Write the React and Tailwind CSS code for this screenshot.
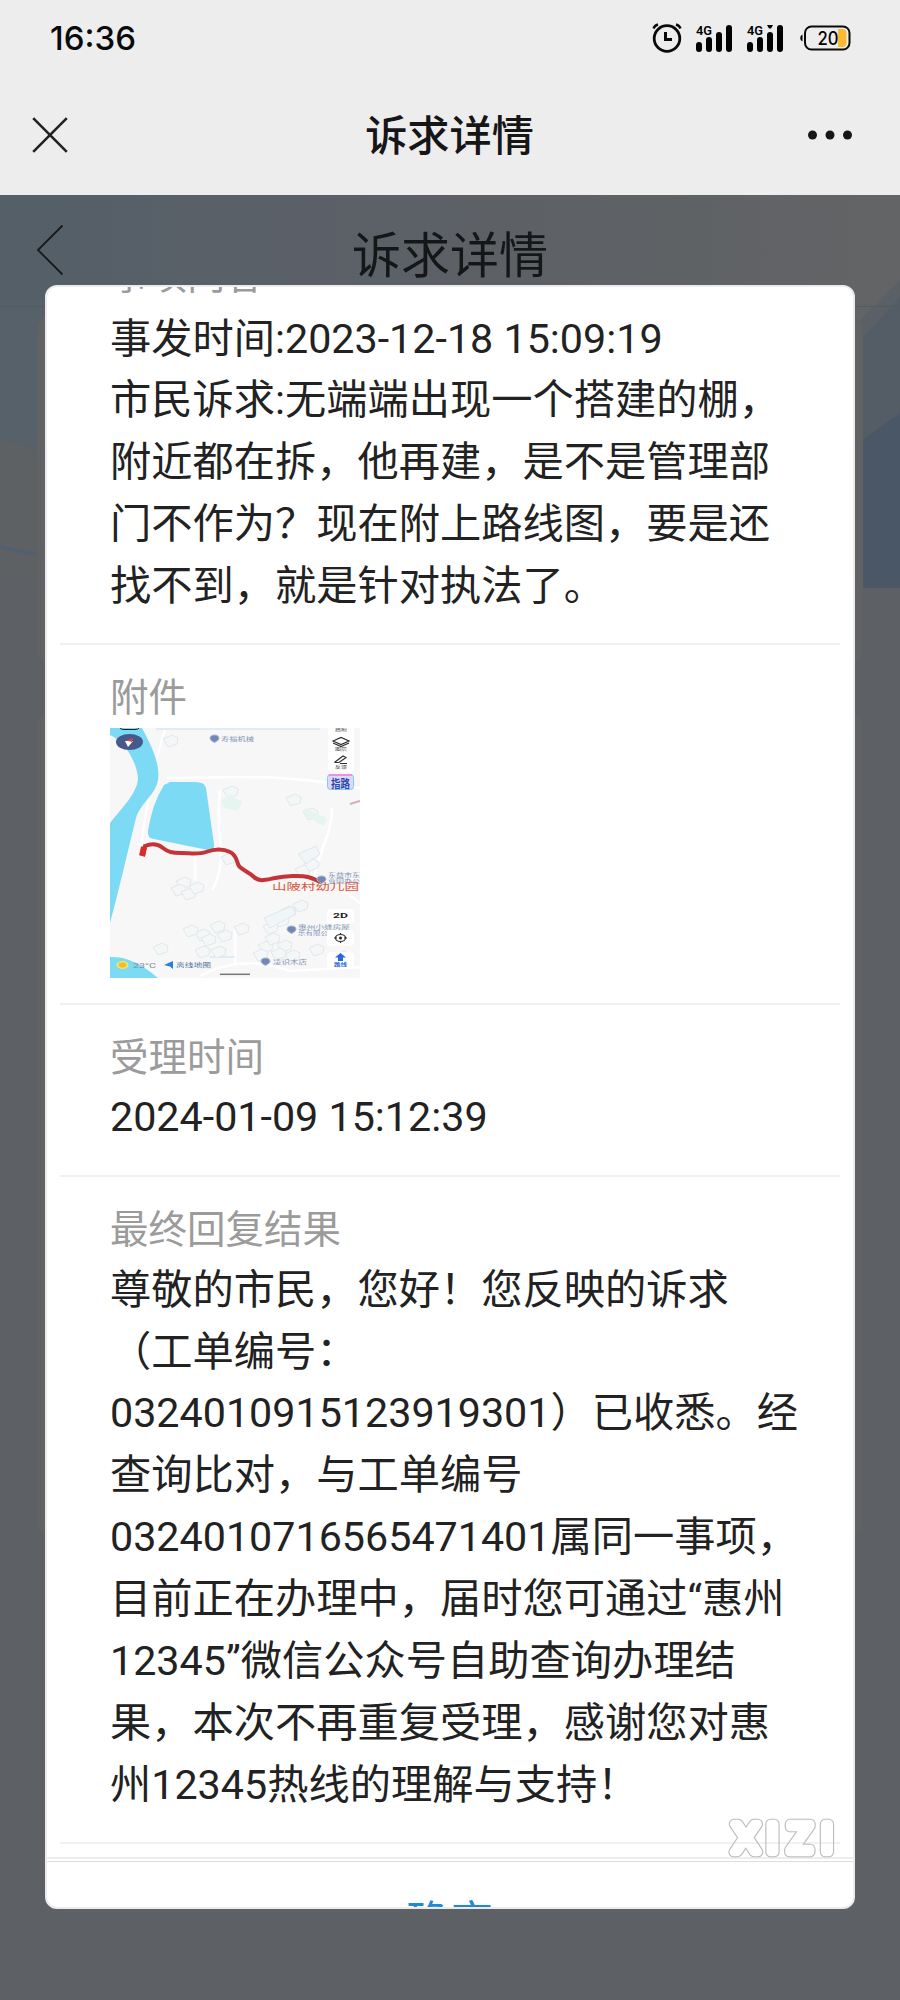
import React from 'react';

const body = [
  '事发时间:2023-12-18 15:09:19',
  '市民诉求:无端端出现一个搭建的棚，',
  '附近都在拆，他再建，是不是管理部',
  '门不作为？现在附上路线图，要是还',
  '找不到，就是针对执法了。',
];

const reply = [
  '尊敬的市民，您好！您反映的诉求',
  '（工单编号：',
  '0324010915123919301）已收悉。经',
  '查询比对，与工单编号',
  '0324010716565471401属同一事项，',
  '目前正在办理中，届时您可通过“惠州',
  '12345”微信公众号自助查询办理结',
  '果，本次不再重复受理，感谢您对惠',
  '州12345热线的理解与支持！',
];

function Lines({ items }) {
  return (
    <div className="text-[41.25px] leading-[61.875px] text-[#222222] whitespace-nowrap [text-spacing-trim:space-all]">
      {items.map((line) => (
        <p key={line}>{line}</p>
      ))}
    </div>
  );
}

function Label({ children }) {
  return <div className="text-[38.5px] leading-[57.6px] text-[#9b9b9b] whitespace-nowrap">{children}</div>;
}

function Signal({ dotted }) {
  return (
    <svg className="overflow-visible" width="37" height="29" viewBox="0 0 37 29">
      <text x="0" y="11" fontFamily="Roboto" fontSize="13.500" fontWeight="600" textLength="16" lengthAdjust="spacingAndGlyphs">4G</text>
      <rect x="0" y="18" width="6" height="10" rx="3" />
      <rect x="10" y="13" width="6" height="15" rx="3" />
      <rect x="20" y="8" width="6" height="20" rx="3" />
      <rect x="30" y="1" width="6" height="27" rx="3" />
      {dotted && <path d="M20 1h6l-2 3.500h-2z" />}
    </svg>
  );
}

function StatusBar() {
  return (
    <div className="flex h-[75px] items-center justify-between pl-[50px] pr-[49px] pt-px">
      <span className="font-[Inter,sans-serif] text-[33px] font-medium leading-none text-[#0a0a0a]">16:36</span>
      <div className="flex items-center">
        <svg width="30" height="30" viewBox="0 0 30 30" fill="none" stroke="#0a0a0a">
          <circle cx="15" cy="15.500" r="12.800" strokeWidth="2.800" />
          <path d="M13.500 9v7.500H20" strokeWidth="3" />
          <path d="M1.500 5.500Q2.500 2.500 6 1.500M28.500 5.500Q27.500 2.500 24 1.500" strokeWidth="2.400" />
        </svg>
        <div className="ml-[14px]"><Signal /></div>
        <div className="ml-[14px]"><Signal dotted /></div>
        <svg className="ml-[16px]" width="51" height="26" viewBox="0 0 51 26">
          <path d="M2.500 9.500v7C.800 15.500.300 14.500.300 13s.500-2.500 2.200-3.500z" />
          <rect x="5" y="1.500" width="44.500" height="23" rx="6.500" fill="none" stroke="#0a0a0a" strokeWidth="2" />
          <path d="M38 4h4.500a4 4 0 0 1 4 4v10a4 4 0 0 1-4 4H38z" fill="#fbb92f" />
          <text x="17.500" y="19.500" fontFamily="Inter" fontSize="18" fontWeight="500" textLength="21" lengthAdjust="spacingAndGlyphs">20</text>
        </svg>
      </div>
    </div>
  );
}

function NavBar() {
  return (
    <div className="flex h-[120px] items-center justify-between pl-[32px] pr-[47px]">
      <svg width="36" height="36" viewBox="0 0 36 36" fill="none" stroke="#222" strokeWidth="2.600">
        <path d="M1.200 1.200 34.800 34.800M34.800 1.200 1.200 34.800" />
      </svg>
      <h1 className="ml-[24px] pt-[4px] text-[42.2px] font-medium leading-none text-[#161616]">诉求详情</h1>
      <svg width="46" height="10" viewBox="0 0 46 10" fill="#161616">
        <circle cx="5.500" cy="5" r="4.500" />
        <circle cx="23" cy="5" r="4.500" />
        <circle cx="40.500" cy="5" r="4.500" />
      </svg>
    </div>
  );
}

// dimmed page artwork behind the dialog
function Backdrop() {
  return (
    <svg className="absolute inset-0" width="900" height="1805" viewBox="0 195 900 1805">
      <defs>
        <linearGradient id="top" x1="0" y1="0" x2="1" y2="0">
          <stop offset="0" stopColor="#545f68" />
          <stop offset="0.350" stopColor="#5b6068" />
          <stop offset="0.600" stopColor="#5d6165" />
          <stop offset="1" stopColor="#636466" />
        </linearGradient>
      </defs>
      <rect y="195" width="900" height="1805" fill="#5d6065" />
      <rect y="195" width="900" height="250" fill="url(#top)" />
      <path d="M0 300H60V455L36 451 0 439z" fill="#56616a" />
      <path d="M0 439 45 453V588H0z" fill="#5e6164" />
      <path d="M0 545 45 554V558L0 549z" fill="#50606e" />
      <path d="M855 325 900 280V588H855z" fill="#5a6066" />
      <path d="M855 347 900 297V588H855z" fill="#545d66" />
      <path d="M855 445 900 413V588H855z" fill="#4a5767" />
      <rect x="37" y="312" width="826" height="355" rx="20" fill="#616263" />
      <rect x="37" y="708" width="826" height="833" rx="20" fill="#606263" />
      <path d="M0 306.500H45M855 306.500H900" stroke="#535a61" />
    </svg>
  );
}

function MapThumb() {
  const blocks = [
    [118, 131], [73, 155], [68, 162], [192, 143], [201, 137], [107, 199], [92, 207], [80, 203],
    [131, 201], [50, 221], [92, 224], [108, 224], [155, 219], [174, 218], [160, 200], [178, 184],
    [190, 178], [206, 222], [232, 229], [171, 193], [200, 86], [183, 72], [120, 64], [60, 13],
    [78, 166], [86, 160], [98, 212], [114, 208], [150, 227], [168, 226], [182, 228], [162, 211],
  ];
  return (
    <svg width="250" height="250" viewBox="0 0 250 250" fontFamily="Roboto, 'Noto Sans CJK SC', sans-serif">
      <rect width="250" height="250" fill="#f7f7f8" />
      <path d="M57 50c50 0 110-6 193 10M110 62c-6 40 10 70-8 100M222 80c0 30-16 45-18 75M55 2C45 30 34 90 31 120M85 128v24M125 200v35M230 160l20 15M90 248c30-16 60-16 90-5l70-4" fill="none" stroke="#fff" strokeWidth="2.500" />
      <path d="M46 1h164M100 229h25" stroke="#dfebf6" strokeWidth="2" />
      <g fill="#f4f7f7" stroke="#e2e7e9" strokeWidth="1">
        {blocks.map(([x, y]) => (
          <path key={`${x}-${y}`} d={`M${x - 7} ${y - 2}l9-4 6 3-1 6-9 3z`} />
        ))}
        <path d="M188 126l18-8 4 8-14 10zM154 190l28-12 4 8-26 14z" fill="#eef6f7" />
      </g>
      <path d="M111 72l10-6 5 5 7 2-5 10-14-3zM195 80l22 10-3 8-20-10z" fill="#e6f5ef" />
      <path d="M0 0H32C44 22 50 38 48 52 46 66 30 76 26 90 18 122 10 158 0 195V95C12 80 28 64 28 50 26 30 12 12 0 7z" fill="#7cdaf4" />
      <path d="M0 229C20 228 36 240 48 250H0z" fill="#7cdaf4" />
      <path d="M60 54H85Q95 54 96 60L104 116Q105 122 98 122L44 111Q37 110 38 103 42 76 54 57z" fill="#7cdaf4" />
      <path d="M33 128 35 118C42 115 48 116 53 120S62 125 71 125 88 127 96 124 112 120 120 124 126 134 129 138 139 144 144 149 155 152 165 150 190 147 198 149 206 153 212 154" fill="none" stroke="#c43337" strokeWidth="4" />
      <path d="M32 128 34 119" stroke="#d52d2d" strokeWidth="6" />
      <path d="M240 76 250 73" stroke="#d5aeb2" strokeWidth="2" />
      <path d="M10 0q1 1.500 4 1.500h11q3 0 4-1.500" fill="none" stroke="#222" />
      <ellipse cx="19.500" cy="14" rx="13.500" ry="8" fill="#45598a" />
      <path d="M15 13l8 0-5 6z" fill="#fff" />
      <path d="M16 12.500l7-2.500-1 4z" fill="#e0434f" />

      <g fill="#7188b5" stroke="#a9b7d3">
        <path d="M100 10.500a4.500 3.500 0 0 1 9 0q0 2-4.500 4-4.500-2-4.500-4zM207 151.500a4.500 3.500 0 0 1 9 0q0 2-4.500 4-4.500-2-4.500-4zM177 201.500a4.500 3.500 0 0 1 9 0q0 2-4.500 4-4.500-2-4.500-4zM151 233.500a4.500 3.500 0 0 1 9 0q0 2-4.500 4-4.500-2-4.500-4z" />
      </g>
      <g fill="#8193b3" fontSize="5.500">
        <text x="111" y="13" textLength="33" lengthAdjust="spacingAndGlyphs">寿福机械</text>
        <text x="218" y="149" textLength="32" lengthAdjust="spacingAndGlyphs">东益市东</text>
        <text x="218" y="155" textLength="32" lengthAdjust="spacingAndGlyphs">业园办公</text>
        <text x="188" y="201" textLength="52" lengthAdjust="spacingAndGlyphs">惠州小蜂房屋</text>
        <text x="188" y="207" textLength="30" lengthAdjust="spacingAndGlyphs">乐有限公</text>
        <text x="163" y="236" textLength="34" lengthAdjust="spacingAndGlyphs">凌识木店</text>
        <text x="66" y="239" fill="#53749c" textLength="35" lengthAdjust="spacingAndGlyphs">离线地图</text>
      </g>
      <text x="162" y="161.500" fontSize="9.500" fill="#d9583c" textLength="87" lengthAdjust="spacingAndGlyphs">山陂村幼儿园</text>

      <rect x="218" y="-6" width="26" height="50" rx="4" fill="#fff" />
      <rect x="217" y="181" width="27" height="15" rx="4" fill="#fff" />
      <rect x="217" y="202" width="27" height="16" rx="4" fill="#fff" />
      <rect x="217" y="224" width="27" height="17" rx="4" fill="#fff" />
      <g fill="none" stroke="#303030" strokeWidth="1.200">
        <path d="M223 13 231 9.500 239 13 231 16.500zM223 15 231 18.500 239 15" />
        <path d="M225 34 233 28 236 29.500 229 34.500H225zM230 35.500H237" />
        <ellipse cx="230.500" cy="210" rx="5" ry="3.500" />
        <path d="M224 210h3M234 210h3M230.500 205v2M230.500 213v2" />
      </g>
      <circle cx="230.500" cy="210" r="1.500" fill="#222" />
      <g fill="#4a4a4a" fontSize="4">
        <text x="225" y="4" textLength="12" lengthAdjust="spacingAndGlyphs">搭附</text>
        <text x="225" y="23" textLength="12" lengthAdjust="spacingAndGlyphs">图层</text>
        <text x="225" y="41" textLength="12" lengthAdjust="spacingAndGlyphs">反馈</text>
      </g>
      <rect x="217.500" y="46.500" width="26" height="15" rx="3" fill="#ddd9fb" stroke="#80c9ef" />
      <path d="M219 47H242" stroke="#e595dc" strokeWidth="2" />
      <text x="221" y="60" fontSize="11" fontWeight="700" fill="#2a45a8" textLength="19" lengthAdjust="spacingAndGlyphs">指路</text>
      <text x="223" y="190" fontSize="7" fontWeight="700" fill="#222" textLength="15" lengthAdjust="spacingAndGlyphs">2D</text>
      <path d="M230.500 225 236 229.500H233V233H228V229.500H225z" fill="#2868df" />
      <text x="224" y="238" fontSize="4.500" fontWeight="700" fill="#2868df" textLength="13" lengthAdjust="spacingAndGlyphs">路线</text>
      <ellipse cx="12.500" cy="237" rx="6" ry="4" fill="#f8e46f" />
      <ellipse cx="12.500" cy="237" rx="4" ry="2.800" fill="#f5bf28" />
      <text x="23" y="239.500" fontSize="7" fill="#7e8ba0" textLength="23" lengthAdjust="spacingAndGlyphs">23°C</text>
      <path d="M54 237 63 233V241L60 238.500z" fill="#2380dc" />
      <path d="M110 246.300H140" stroke="#777" strokeWidth="1.500" />
    </svg>
  );
}

// hollow rounded lettering: thick stroke minus a slightly thinner one
function Watermark() {
  return (
    <svg className="absolute bottom-[49px] right-[18px]" width="114" height="42" viewBox="0 0 114 42">
      <defs>
        <mask id="outline" maskUnits="userSpaceOnUse" x="0" y="0" width="114" height="42">
          <g fontFamily="Lato" fontSize="39" strokeLinejoin="round" textAnchor="middle">
            <g fill="#fff" stroke="#fff" strokeWidth="10.500">
              <text x="25" y="36">X</text>
              <text x="51.500" y="36">I</text>
              <text x="79" y="36">Z</text>
              <text x="106" y="36">I</text>
            </g>
            <g fill="#000" stroke="#000" strokeWidth="8.300">
              <text x="25" y="36">X</text>
              <text x="51.500" y="36">I</text>
              <text x="79" y="36">Z</text>
              <text x="106" y="36">I</text>
            </g>
          </g>
        </mask>
      </defs>
      <rect width="114" height="42" fill="#bdbdbd" mask="url(#outline)" />
    </svg>
  );
}

function Dialog() {
  return (
    <div className="relative mx-[45px] mt-[90px] flex h-[1624px] flex-col overflow-hidden rounded-[12px] border-2 border-[#ececee] bg-white">
      <div className="h-[1570px] shrink-0 overflow-hidden px-[13px]">
        <section className="-mt-[40px] border-b-2 border-[#f1f1f1] pb-[25px] pl-[50px]">
          <Label>事项内容</Label>
          <div className="mt-[4px]">
            <Lines items={body} />
          </div>
        </section>
        <section className="border-b-2 border-[#f1f1f1] pb-[25px] pl-[50px] pt-[24px]">
          <Label>附件</Label>
          <div className="mt-px">
            <MapThumb />
          </div>
        </section>
        <section className="border-b-2 border-[#f1f1f1] pb-[26px] pl-[50px] pt-[24px]">
          <Label>受理时间</Label>
          <div className="mt-px">
            <Lines items={['2024-01-09 15:12:39']} />
          </div>
        </section>
        <section className="border-b-2 border-[#f1f1f1] pb-[25px] pl-[50px] pt-[24px]">
          <Label>最终回复结果</Label>
          <div className="mt-px">
            <Lines items={reply} />
          </div>
        </section>
      </div>
      <div className="h-[5px] shrink-0 border-b border-t-2 border-b-[#dedede] border-t-[#ededed]"></div>
      <button className="flex-1 overflow-hidden pt-[37px] text-center text-[44px] leading-[48px] text-[#1e8ad0]">确定</button>
      <Watermark />
    </div>
  );
}

export default function App() {
  return (
    <div className="h-[2000px] w-[900px] overflow-hidden bg-[#ededed] font-[Roboto,'Noto_Sans_CJK_SC',sans-serif]">
      <StatusBar />
      <NavBar />
      <main className="relative h-[1805px] overflow-hidden bg-[#5d6065]">
        <Backdrop />
        <div className="absolute left-0 right-0 top-0 flex h-[120px] items-center">
          <svg className="ml-[36px] mt-[-11px]" width="28" height="52" viewBox="0 0 28 52" fill="none" stroke="#17191b" strokeWidth="1.800">
            <path d="M26.500 1.500 2 26 26.500 50.500" />
          </svg>
          <h2 className="ml-[288px] pt-[3px] text-[49px] leading-none text-[#151617]">诉求详情</h2>
        </div>
        <div className="flow-root">
          <Dialog />
        </div>
      </main>
    </div>
  );
}
